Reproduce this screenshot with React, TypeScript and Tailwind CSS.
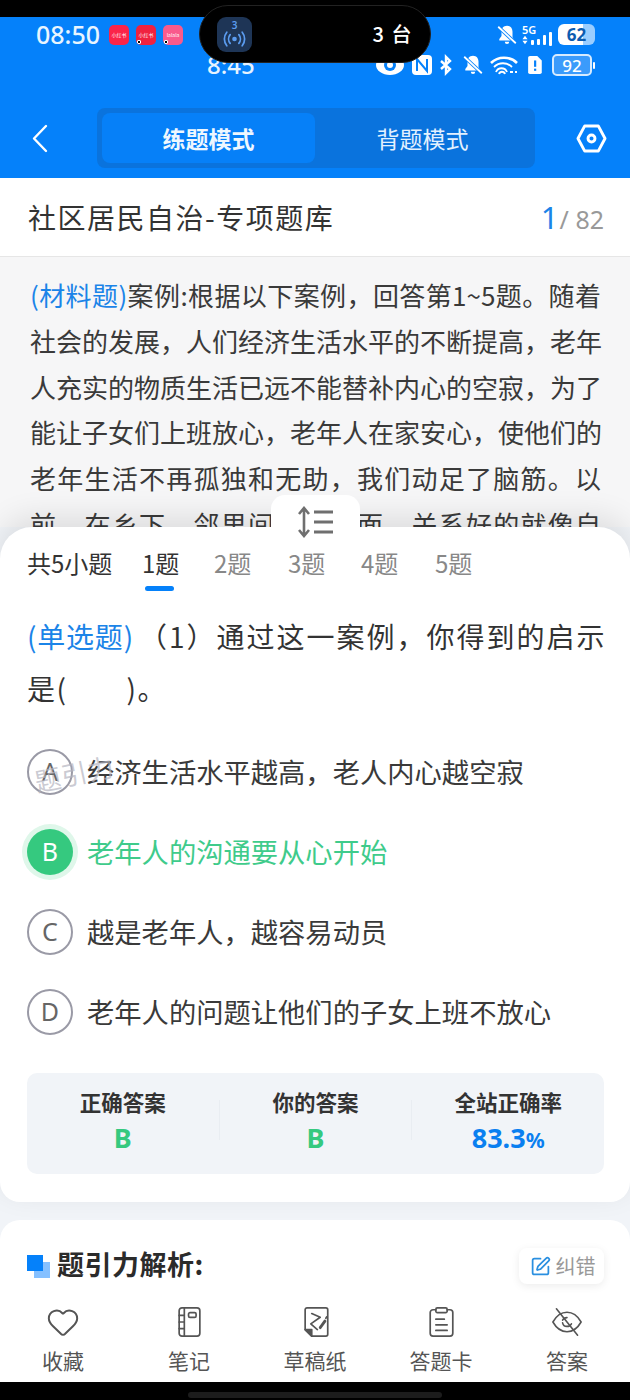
import React from 'react';
import { Heart, SquarePen } from 'lucide-react';

const CJK = "font-['Noto_Sans_CJK_SC','Noto_Sans',sans-serif]";

const passage = [
  '社会的发展，人们经济生活水平的不断提高，老年',
  '人充实的物质生活已远不能替补内心的空寂，为了',
  '能让子女们上班放心，老年人在家安心，使他们的',
  '老年生活不再孤独和无助，我们动足了脑筋。以',
  '前，在乡下，邻里间走动见面，关系好的就像自',
];

const options = [
  { key: 'A', text: '经济生活水平越高，老人内心越空寂' },
  { key: 'B', text: '老年人的沟通要从心开始', correct: true },
  { key: 'C', text: '越是老年人，越容易动员' },
  { key: 'D', text: '老年人的问题让他们的子女上班不放心' },
];

const AppBadge = ({ label, className, dot }: { label: string; className: string; dot?: boolean }) => (
  <div className={`relative flex h-5 w-5 items-center justify-center overflow-hidden rounded-[5px] text-[5px] leading-none text-white ${className}`}>
    {label}
    {dot && <span className="absolute bottom-[1px] left-[1px] h-[4px] w-[4px] rounded-[1px] border border-white bg-black" />}
  </div>
);

const BellOff = ({ className }: { className?: string }) => (
  <svg viewBox="0 0 20 20" className={className} fill="white">
    <path d="M10 1.5c-3.4 0-5 2.6-5 5.5v4l-2 2.6V15h13.5l-1-2-.5-1V7c0-2.9-1.6-5.5-5-5.5zM8 16.2h4a2 2 0 0 1-4 0z" />
    <path d="M2 2.5l16 15" stroke="#0581fa" strokeWidth="3.2" />
    <path d="M2 2.5l16 15" stroke="white" strokeWidth="1.6" />
  </svg>
);

const StatusBar = () => (
  <div className="relative h-[37px]">
    <div className="flex h-[35px] items-center pl-[36px] pr-[35px]">
      <span className="font-['Noto_Sans',sans-serif] text-[25px] font-medium leading-none text-[#e8f5ff]">08:50</span>
      <div className="ml-[9px] flex gap-[7px]">
        <AppBadge label="小红书" className="bg-[#fb2449]" />
        <AppBadge label="小红书" className="bg-[#f0213f]" dot />
        <AppBadge label="lalala" className="bg-[#f95a8c]" dot />
      </div>
      <div className="ml-auto flex items-center">
        <BellOff className="h-[22px] w-[22px]" />
        <div className="ml-[4px] flex flex-col">
          <span className="font-['Noto_Sans',sans-serif] text-[11px] font-semibold leading-[11px] text-white">5G</span>
          <div className="flex items-end gap-[3px]">
            <svg viewBox="0 0 7 10" className="h-[10px] w-[6px]" fill="white"><path d="M3.5 0L6.5 4h-6zM3.5 10L.5 6h6z" /></svg>
            <span className="h-[5px] w-[3px] rounded-[1px] bg-white" />
            <span className="h-[6px] w-[3px] rounded-[1px] bg-white" />
            <span className="h-[10px] w-[3px] rounded-[1px] bg-white" />
          </div>
        </div>
        <span className="ml-[3px] mt-[5px] h-[14px] w-[3px] self-end rounded-[1px] bg-white" />
        <div className="ml-[6px] flex h-[21px] w-[37px] items-center justify-center rounded-[6px] bg-[linear-gradient(90deg,#ffffff_68%,#9acdff_68%)] font-['Noto_Sans',sans-serif] text-[17px] font-bold leading-none text-[#0d5cb0]">
          62
        </div>
      </div>
    </div>
  </div>
);

const SecondStatus = () => (
  <div className="flex h-[22px] items-center pr-[35px]">
    <span className="ml-[207px] font-['Noto_Sans',sans-serif] text-[24px] font-medium leading-none text-[#e6f3ff]">8:45</span>
    <div className="ml-auto flex items-center">
      <svg viewBox="0 0 28 20" className="h-[20px] w-[28px]"><ellipse cx="14" cy="10" rx="14" ry="10" fill="white" /><circle cx="14" cy="10" r="6" fill="#0581fa" /><circle cx="14" cy="10" r="3" fill="white" /></svg>
      <svg viewBox="0 0 20 22" className="ml-[8px] h-[22px] w-[20px]" fill="none"><rect x="0" y="1" width="20" height="20" rx="4" fill="white" /><path d="M5 17V5l10 12V5" stroke="#0581fa" strokeWidth="2" /></svg>
      <svg viewBox="0 0 14 22" className="ml-[7px] h-[22px] w-[14px]" fill="none" stroke="white" strokeWidth="2.4"><path d="M2 7l9 8-4 4V3l4 4-9 8" /></svg>
      <BellOff className="ml-[9px] h-[22px] w-[22px]" />
      <svg viewBox="0 0 28 22" className="ml-[6px] h-[22px] w-[28px]" fill="none" stroke="white" strokeWidth="1.8"><path d="M1 9c7-7 19-7 26 0" strokeWidth="2.6" /><path d="M4 13c5-5 13-5 18 0" /><path d="M6 18c2-5 9-5 11 0" /><path d="M9 20c1-3 5-3 6 0" /><path d="M20 18l3 0M25 18l2 0" /></svg>
      <svg viewBox="0 0 18 22" className="ml-[8px] h-[20px] w-[17px]"><path d="M4 1h8l5 5v13a2 2 0 0 1-2 2H4a2 2 0 0 1-2-2V3a2 2 0 0 1 2-2z" fill="white" /><rect x="8.5" y="6" width="2.4" height="7" fill="#0581fa" /><rect x="8.5" y="15" width="2.4" height="2.4" fill="#0581fa" /></svg>
      <div className="ml-[9px] flex items-center gap-[1px]">
        <div className="flex h-[22px] w-[40px] items-center justify-center rounded-[5px] border-2 border-[#d6ebff] bg-[#3b9bfb] font-['Noto_Sans',sans-serif] text-[17px] font-medium leading-none text-white">92</div>
        <span className="h-[7px] w-[2px] rounded-[1px] bg-white" />
      </div>
    </div>
  </div>
);

const Header = () => (
  <div className="flex h-[102px] items-start pt-[32px]">
    <div className="flex h-[60px] w-[97px] items-center pl-[31px]">
      <svg viewBox="0 0 17 29" className="h-[29px] w-[17px]" fill="none" stroke="white" strokeWidth="2.4" strokeLinecap="round" strokeLinejoin="round">
        <path d="M15 2L3 14.5 15 27" />
      </svg>
    </div>
    <div className="flex h-[60px] w-[438px] rounded-[8px] bg-[#0a73dd] p-[5px]">
      <div className="flex w-[213px] items-center justify-center rounded-[8px] bg-[#0680f8] text-[23px] font-bold text-[#eef7ff]">练题模式</div>
      <div className="flex flex-1 items-center justify-center text-[23px] text-[#e3f1ff]">背题模式</div>
    </div>
    <div className="flex h-[60px] flex-1 items-center justify-center pl-[17px]">
      <svg viewBox="0 0 32 30" className="h-[29px] w-[31px]" fill="none" stroke="white" strokeWidth="3" strokeLinejoin="round">
        <path d="M9 2h14l7 13-7 13H9L2 15z" />
        <circle cx="16" cy="15" r="3.6" />
      </svg>
    </div>
  </div>
);

const Island = () => (
  <div className="absolute left-[199px] top-[5px] flex h-[58px] w-[232px] items-center justify-between rounded-[29px] border border-[#222] bg-black pl-[17px] pr-[17px]">
    <div className="flex h-[35px] w-[35px] flex-col items-center justify-center rounded-[9px] bg-[#1e3556] text-[#5b9cf0]">
      <span className="font-['Noto_Sans',sans-serif] text-[10px] font-semibold leading-[10px]">3</span>
      <svg viewBox="0 0 26 18" className="h-[18px] w-[25px]" fill="none" stroke="currentColor" strokeWidth="1.8" strokeLinecap="round">
        <circle cx="13" cy="9" r="2.4" fill="currentColor" stroke="none" />
        <path d="M8.5 4.5a7 7 0 0 0 0 9M17.5 4.5a7 7 0 0 1 0 9M5 2a11 11 0 0 0 0 14M21 2a11 11 0 0 1 0 14" />
      </svg>
    </div>
    <span className="text-[20px] font-medium tracking-[1.5px] text-white">3 台</span>
  </div>
);

const Stat = ({ label, children }: { label: string; children: React.ReactNode }) => (
  <div className="flex flex-1 flex-col items-center">
    <span className="text-[21.5px] font-bold leading-[30px] text-[#333]">{label}</span>
    <div className="mt-[6px] h-[30px] font-['Noto_Sans',sans-serif] text-[27px] font-bold leading-[30px]">{children}</div>
  </div>
);

const NavItem = ({ icon, label }: { icon: React.ReactNode; label: string }) => (
  <div className="flex flex-1 flex-col items-center">
    <div className="flex h-[40px] items-center">{icon}</div>
    <span className="mt-[1px] text-[21px] leading-[34px] text-[#555]">{label}</span>
  </div>
);

const navStroke = {
  fill: 'none',
  stroke: '#555',
  strokeWidth: 1.8,
  strokeLinecap: 'round' as const,
  strokeLinejoin: 'round' as const,
};

const App: React.FC = () => {
  return (
    <div className={`h-[1400px] w-[630px] overflow-hidden bg-[#f1f4f8] ${CJK}`}>
      <div className="relative bg-[#0581fa]">
        <div className="h-[17px] bg-black" />
        <StatusBar />
        <SecondStatus />
        <Header />
        <Island />
      </div>

      <div className="flex h-[79px] items-center justify-between border-b border-[#e6e6e6] bg-white pl-[28px] pr-[26px]">
        <span className="text-[28px] leading-none tracking-[1.5px] text-[#333]">社区居民自治-专项题库</span>
        <div className="flex items-baseline font-['Noto_Sans',sans-serif]">
          <span className="text-[31px] leading-none text-[#1b84e8]">1</span>
          <span className="ml-[1px] text-[25px] leading-none text-[#999]">/ 82</span>
        </div>
      </div>

      <div className="relative h-[270px] overflow-hidden bg-[#f6f6f7] pl-[30px] pt-[15px] text-[26px] leading-[45.8px] whitespace-nowrap text-[#3a3a3a]">
        <div className="w-[571px] [text-align-last:justify]"><span className="text-[#1b84e8]">(材料题)</span>案例:根据以下案例，回答第1~5题。随着</div>
        {passage.map(line => (
          <div key={line} className="w-[571px] [text-align-last:justify]">{line}</div>
        ))}
      </div>

      <div className="relative h-[675px] rounded-t-[32px] rounded-b-[20px] bg-white pl-[27px] pr-[26px] pt-[16px] shadow-[0_-10px_30px_rgba(0,0,0,0.1)]">
        <div className="absolute left-[271px] top-[-32px] flex h-[50px] w-[89px] justify-center rounded-t-[14px] bg-white pt-[11px]">
          <svg viewBox="0 0 38 32" className="h-[32px] w-[38px]" fill="none" stroke="#6f6f6f" strokeWidth="2.6">
            <path d="M7 2v28M2 8l5-6 5 6M2 24l5 6 5-6" />
            <path d="M17 6h19M17 16h19M17 26h19" strokeWidth="3" />
          </svg>
        </div>

        <div className="flex h-[40px] items-center text-[24px] leading-none text-[#888]">
          <span className="w-[115px] text-[#333]">共5小题</span>
          <div className="relative w-[72px] text-[#333]">
            1题
            <span className="absolute left-[3px] top-[35px] h-[5px] w-[29px] rounded-full bg-[#0581fa]" />
          </div>
          <span className="w-[74px]">2题</span>
          <span className="w-[73px]">3题</span>
          <span className="w-[74px]">4题</span>
          <span>5题</span>
        </div>

        <div className="mt-[27px] text-[28px] leading-[52px] text-[#333]">
          <div className="whitespace-nowrap"><span className="tracking-[0.8px] text-[#1b84e8]">(单选题)</span><span className="ml-[5px] tracking-[2px]">（1）通过这一案例，你得到的启示</span></div>
          <div className="tracking-[1.5px]">是(　　)。</div>
        </div>

        <div className="relative mt-[35px] flex flex-col gap-[34px]">
          {options.map(opt => (
            <div key={opt.key} className="flex h-[46px] items-center">
              {opt.correct ? (
                <div className="flex h-[46px] w-[46px] items-center justify-center rounded-full bg-[#35c97f] font-['Noto_Sans',sans-serif] text-[25px] text-white shadow-[0_0_0_5px_#dff7ea]">{opt.key}</div>
              ) : (
                <div className="flex h-[46px] w-[46px] items-center justify-center rounded-full border-2 border-[#9a9aa6] font-['Noto_Sans',sans-serif] text-[25px] text-[#666]">{opt.key}</div>
              )}
              <span className={`ml-[14px] text-[27.3px] leading-none ${opt.correct ? 'text-[#3fcb8b]' : 'text-[#3a3a3a]'}`}>{opt.text}</span>
            </div>
          ))}
          <span className="absolute left-[7px] top-[11px] -rotate-[12deg] text-[26px] leading-none tracking-[1px] text-[#b4b4c0]/70">题引力</span>
        </div>

        <div className="mt-[38px] flex h-[101px] items-center rounded-[10px] bg-[#f1f4f8] pb-[8px]">
          <Stat label="正确答案"><span className="text-[#35c97f]">B</span></Stat>
          <span className="h-[40px] w-px bg-[#e9edf2]" />
          <Stat label="你的答案"><span className="text-[#35c97f]">B</span></Stat>
          <span className="h-[40px] w-px bg-[#e9edf2]" />
          <Stat label="全站正确率"><span className="text-[#0a7ff0]">83.3<span className="text-[21px]">%</span></span></Stat>
        </div>
      </div>

      <div className="mt-[18px] flex h-[76px] items-start rounded-t-[20px] bg-white pl-[27px] pr-[26px] pt-[28px]">
        <div className="relative mt-[7px] h-[23px] w-[23px]">
          <span className="absolute bottom-0 right-0 h-[16px] w-[16px] bg-[#85c0ff]" />
          <span className="absolute left-0 top-0 h-[16px] w-[16px] bg-[#0581fa]" />
        </div>
        <span className="ml-[7px] -mt-[2px] text-[27px] font-bold leading-[36px] tracking-[0.5px] text-[#2b2b2b]">题引力解析:</span>
        <div className="ml-auto flex h-[36px] w-[85px] items-center justify-center gap-[5px] rounded-[8px] bg-white pl-[2px] shadow-[0_2px_8px_rgba(0,0,0,0.08)]">
          <SquarePen className="h-[21px] w-[21px] text-[#2a8fe0]" strokeWidth={2} />
          <span className="text-[20px] leading-none text-[#999]">纠错</span>
        </div>
      </div>

      <div className="flex h-[86px] bg-white pt-[6px]">
        <NavItem label="收藏" icon={<Heart className="h-[34px] w-[34px] text-[#555]" strokeWidth={1.4} />} />
        <NavItem
          label="笔记"
          icon={
            <svg viewBox="0 0 26 34" className="h-[32px] w-[25px]" {...navStroke}>
              <rect x="2" y="2" width="22" height="30" rx="3" />
              <path d="M7.5 2v30M2 10h5.5M2 17h5.5M2 24h5.5" />
              <rect x="12" y="7" width="8" height="5" rx="1.5" />
            </svg>
          }
        />
        <NavItem
          label="草稿纸"
          icon={
            <svg viewBox="0 0 28 34" className="h-[32px] w-[27px]" {...navStroke}>
              <path d="M5 2h20a2 2 0 0 1 2 2v26a2 2 0 0 1-2 2H10l-7-7V4a2 2 0 0 1 2-2z" />
              <path d="M3 25h7v7z" fill="#555" />
              <path d="M10 8l9 4-10 7 7 6" />
              <path d="M19 23l5-7" strokeWidth="3" />
              <path d="M25 13l1-1.5" />
            </svg>
          }
        />
        <NavItem
          label="答题卡"
          icon={
            <svg viewBox="0 0 28 34" className="h-[32px] w-[27px]" {...navStroke}>
              <path d="M8 4H5a3 3 0 0 0-3 3v22a3 3 0 0 0 3 3h18a3 3 0 0 0 3-3V7a3 3 0 0 0-3-3h-3" />
              <rect x="8" y="2" width="12" height="5" rx="1.5" />
              <path d="M8 14h9M8 20h12M8 26h12" />
            </svg>
          }
        />
        <NavItem
          label="答案"
          icon={
            <svg viewBox="0 0 36 34" className="h-[30px] w-[34px]" {...navStroke}>
              <path d="M2 17c4-7 9-11 16-11s12 4 16 11c-4 7-9 11-16 11S6 24 2 17z" />
              <path d="M13 15a5.5 5.5 0 0 1 5-3M23 19a5.5 5.5 0 0 1-5 3 5 5 0 0 1-5-4" />
              <path d="M6 2l24 30" />
            </svg>
          }
        />
      </div>

      <div className="flex h-[18px] justify-center bg-black pt-[10px]">
        <span className="h-[6px] w-[254px] rounded-full bg-[#1c1c1c]" />
      </div>
    </div>
  );
};

export default App;
